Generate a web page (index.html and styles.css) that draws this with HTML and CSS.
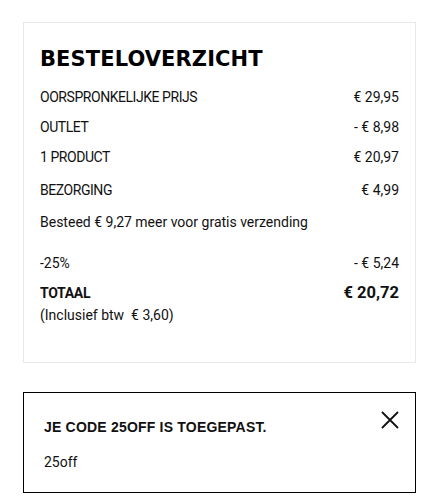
FILE: index.html
```html
<!DOCTYPE html>
<html lang="nl">
<head>
<meta charset="utf-8">
<title>Besteloverzicht</title>
<link rel="stylesheet" href="styles.css">
</head>
<body>
<main class="page">
  <section class="summary">
    <h2 class="summary-title">BESTELOVERZICHT</h2>
    <div class="row row-first"><span class="caps">OORSPRONKELIJKE PRIJS</span><span>€ 29,95</span></div>
    <div class="row row-outlet"><span class="caps">OUTLET</span><span>- € 8,98</span></div>
    <div class="row row-product"><span class="caps">1 PRODUCT</span><span>€ 20,97</span></div>
    <div class="row row-delivery"><span class="caps">BEZORGING</span><span>€ 4,99</span></div>
    <p class="note">Besteed € 9,27 meer voor gratis verzending</p>
    <div class="row row-discount"><span>-25%</span><span>- € 5,24</span></div>
    <div class="row row-total"><span class="total-label">TOTAAL</span><span class="total-value">€ 20,72</span></div>
    <p class="vat">(Inclusief btw&nbsp; € 3,60)</p>
  </section>

  <section class="promo">
    <div class="promo-head">
      <h3 class="promo-title">JE CODE 25OFF IS TOEGEPAST.</h3>
      <button class="promo-close" aria-label="Sluiten">
        <svg width="18" height="18" viewBox="0 0 18 18"><path d="M1 1 L17 17 M17 1 L1 17" stroke="#111" stroke-width="1.8" fill="none"/></svg>
      </button>
    </div>
    <p class="promo-code">25off</p>
  </section>
</main>
</body>
</html>
```
FILE: styles.css
```css
* { box-sizing: border-box; }
html, body { margin: 0; padding: 0; background: #fff; }
body {
  font-family: Roboto, "Liberation Sans", Arial, sans-serif;
  color: #111;
  font-size: 14px;
}
.page {
  width: 393px;
  margin-left: 23px;
  padding-top: 22px;
  display: flex;
  flex-direction: column;
}
.summary {
  border: 1px solid #e8e8e8;
  padding: 22px 16px 37px 16px;
  display: flex;
  flex-direction: column;
}
.summary-title {
  margin: 0;
  font-family: "DejaVu Sans", sans-serif;
  font-weight: 800;
  font-size: 21px;
  line-height: 28px;
  letter-spacing: 0.1px;
  color: #000;
}
.row {
  display: flex;
  justify-content: space-between;
  line-height: 20px;
}
.caps { letter-spacing: -0.45px; }
.row-first { margin-top: 14px; }
.row-outlet { margin-top: 10px; }
.row-product { margin-top: 10px; }
.row-delivery { margin-top: 13px; }
.note { margin: 12px 0 0; line-height: 20px; }
.row-discount { margin-top: 21px; }
.row-total { margin-top: 10px; align-items: center; }
.total-label { font-weight: 700; letter-spacing: -0.3px; }
.total-value { font-weight: 700; font-size: 16.5px; }
.vat { margin: 2px 0 0; line-height: 20px; }

.promo {
  margin-top: 29px;
  border: 1px solid #000;
  padding: 16px 16px 20px 20px;
}
.promo-head {
  display: flex;
  justify-content: space-between;
  align-items: flex-start;
}
.promo-title {
  margin: 8px 0 0;
  font-family: "Liberation Sans", Arial, sans-serif;
  font-size: 14px;
  font-weight: 700;
  letter-spacing: 0.2px;
  line-height: 20px;
}
.promo-close {
  border: 0;
  background: none;
  padding: 0;
  margin: 2px 0 0;
  width: 18px;
  height: 18px;
  display: flex;
}
.promo-code { margin: 15px 0 0; line-height: 20px; }
```
